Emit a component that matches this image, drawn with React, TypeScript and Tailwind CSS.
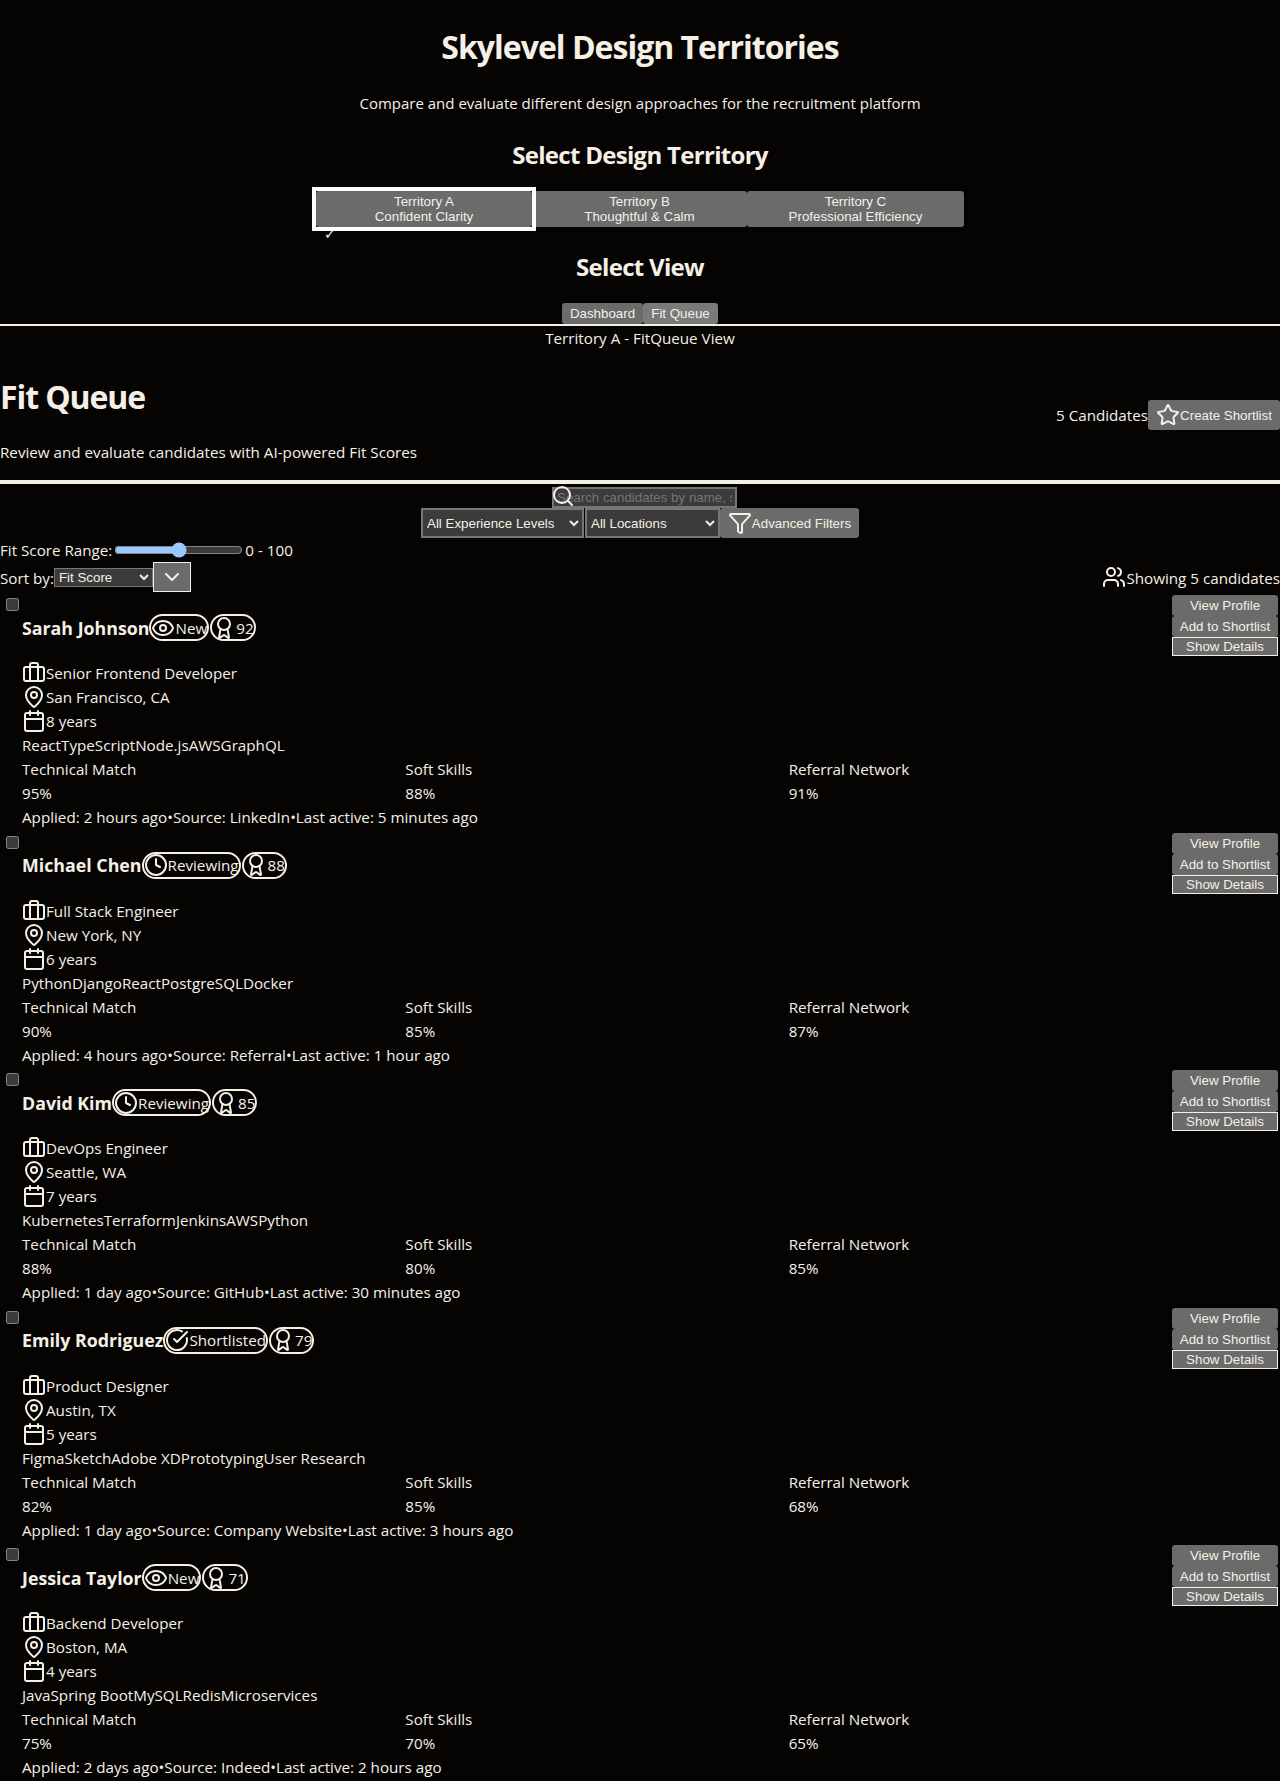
import {
  Award,
  Briefcase,
  Calendar,
  ChevronDown,
  CircleCheckBig,
  Clock,
  Eye,
  Filter,
  MapPin,
  Search,
  Star,
  Users,
} from 'lucide-react'

const candidates = [
  {
    name: 'Sarah Johnson',
    status: 'New',
    fit: 92,
    role: 'Senior Frontend Developer',
    location: 'San Francisco, CA',
    years: '8 years',
    skills: ['React', 'TypeScript', 'Node.js', 'AWS', 'GraphQL'],
    scores: ['95%', '88%', '91%'],
    applied: '2 hours ago',
    source: 'LinkedIn',
    active: '5 minutes ago',
  },
  {
    name: 'Michael Chen',
    status: 'Reviewing',
    fit: 88,
    role: 'Full Stack Engineer',
    location: 'New York, NY',
    years: '6 years',
    skills: ['Python', 'Django', 'React', 'PostgreSQL', 'Docker'],
    scores: ['90%', '85%', '87%'],
    applied: '4 hours ago',
    source: 'Referral',
    active: '1 hour ago',
  },
  {
    name: 'David Kim',
    status: 'Reviewing',
    fit: 85,
    role: 'DevOps Engineer',
    location: 'Seattle, WA',
    years: '7 years',
    skills: ['Kubernetes', 'Terraform', 'Jenkins', 'AWS', 'Python'],
    scores: ['88%', '80%', '85%'],
    applied: '1 day ago',
    source: 'GitHub',
    active: '30 minutes ago',
  },
  {
    name: 'Emily Rodriguez',
    status: 'Shortlisted',
    fit: 79,
    role: 'Product Designer',
    location: 'Austin, TX',
    years: '5 years',
    skills: ['Figma', 'Sketch', 'Adobe XD', 'Prototyping', 'User Research'],
    scores: ['82%', '85%', '68%'],
    applied: '1 day ago',
    source: 'Company Website',
    active: '3 hours ago',
  },
  {
    name: 'Jessica Taylor',
    status: 'New',
    fit: 71,
    role: 'Backend Developer',
    location: 'Boston, MA',
    years: '4 years',
    skills: ['Java', 'Spring Boot', 'MySQL', 'Redis', 'Microservices'],
    scores: ['75%', '70%', '65%'],
    applied: '2 days ago',
    source: 'Indeed',
    active: '2 hours ago',
  },
]

const buttonText = "font-['Liberation_Sans',sans-serif] text-[13.33px] leading-[15px] text-[#f5f0e6]"

function CandidateCard({ candidate }: { candidate: (typeof candidates)[number] }) {
  const StatusIcon =
    candidate.status === 'New' ? Eye : candidate.status === 'Reviewing' ? Clock : CircleCheckBig

  return (
    <div className="flex items-start justify-between pb-[3.5px]">
      <div className="flex-1">
        <input type="checkbox" className="mt-[3px] mb-[3px] ml-[6px] block h-[13px] w-[13px]" />
        <div className="pl-[22px]">
          <div className="flex h-[27px] items-center">
            <span className="text-[17.8px] font-bold">{candidate.name}</span>
            <span className="flex h-[27px] items-center rounded-full border-2 border-[#f5f0e6]">
              <StatusIcon size={24} />
              <span>{candidate.status}</span>
            </span>
            <span className="ml-[1px] flex h-[27px] items-center rounded-full border-2 border-[#f5f0e6]">
              <Award size={24} />
              <span>{candidate.fit}</span>
            </span>
          </div>
          <div className="mt-[20px] flex h-6 items-center">
            <Briefcase size={24} />
            <span>{candidate.role}</span>
          </div>
          <div className="flex h-6 items-center">
            <MapPin size={24} />
            <span>{candidate.location}</span>
          </div>
          <div className="flex h-6 items-center">
            <Calendar size={24} />
            <span>{candidate.years}</span>
          </div>
          <div className="flex h-6 items-center">
            {candidate.skills.map((skill) => (
              <span key={skill}>{skill}</span>
            ))}
          </div>
          <div className="grid grid-cols-3">
            {['Technical Match', 'Soft Skills', 'Referral Network'].map((label, i) => (
              <div key={label}>
                <div className="h-6">{label}</div>
                <div className="h-6">{candidate.scores[i]}</div>
              </div>
            ))}
          </div>
          <div className="flex h-6 items-center">
            <span>Applied: {candidate.applied}</span>
            <span>•</span>
            <span>Source: {candidate.source}</span>
            <span>•</span>
            <span>Last active: {candidate.active}</span>
          </div>
        </div>
      </div>
      <div className="mr-[2px] flex w-[106px] shrink-0 flex-col">
        <button className={`${buttonText} h-[21px] rounded-[3px] bg-[#6b6b6b]`}>View Profile</button>
        <button className={`${buttonText} h-[21px] rounded-[3px] bg-[#6b6b6b]`}>Add to Shortlist</button>
        <button className={`${buttonText} h-[19px] border border-[#f5f0e6] bg-[#6b6b6b]`}>Show Details</button>
      </div>
    </div>
  )
}

export default function App() {
  return (
    <div className="min-h-[1781px] bg-[#060303] font-['Open_Sans',sans-serif] text-[15.2px] leading-6 text-[#f5f0e6] [color-scheme:dark]">
      <div className="text-center">
        <h1 className="pt-[26px] text-[32px] leading-[42px] font-bold tracking-[-1px]">Skylevel Design Territories</h1>
        <p className="mt-[23px] text-[15px]">Compare and evaluate different design approaches for the recruitment platform</p>
        <h2 className="mt-[24px] text-[24px] leading-[32px] font-bold tracking-[-0.7px]">Select Design Territory</h2>
        <div className="mt-[20px] flex justify-center">
          <div className="relative z-10">
            <button className={`${buttonText} block h-[36px] w-[216px] rounded-[3px] bg-[#6b6b6b]`}>
              Territory A
              <br />
              Confident Clarity
            </button>
            <span className="absolute top-[33px] left-[8px] text-sm leading-5">✓</span>
            <span className="pointer-events-none absolute -inset-[4px] border-4 border-white" />
          </div>
          <button className={`${buttonText} h-[36px] w-[215px] rounded-[3px] bg-[#6b6b6b]`}>
            Territory B
            <br />
            Thoughtful &amp; Calm
          </button>
          <button className={`${buttonText} h-[36px] w-[217px] rounded-[3px] bg-[#6b6b6b]`}>
            Territory C
            <br />
            Professional Efficiency
          </button>
        </div>
        <h2 className="mt-[24px] text-[24px] leading-[32px] font-bold tracking-[-0.7px]">Select View</h2>
        <div className="mt-[20px] flex justify-center">
          <button className={`${buttonText} h-[21px] w-[81px] rounded-[3px] bg-[#6b6b6b]`}>Dashboard</button>
          <button className={`${buttonText} h-[21px] w-[75px] rounded-[3px] bg-[#7a7a7a]`}>Fit Queue</button>
        </div>
      </div>
      <div className="border-t-2 border-[#f5f0e6] text-center">Territory A - FitQueue View</div>

      <div className="flex items-center justify-between border-b-4 border-[#f5f0e6] pt-[26px] pb-[16px]">
        <div>
          <h1 className="text-[32px] leading-[42px] font-bold tracking-[-1.1px]">Fit Queue</h1>
          <p className="mt-[22px]">Review and evaluate candidates with AI-powered Fit Scores</p>
        </div>
        <div className="mb-[10px] flex items-center">
          <span>5 Candidates</span>
          <button className={`${buttonText} flex h-[30px] w-[132px] items-center justify-center rounded-[3px] bg-[#6b6b6b]`}>
            <Star size={24} />
            Create Shortlist
          </button>
        </div>
      </div>

      <div className="flex flex-col items-center pt-[3px]">
        <div className="relative ml-[9px]">
          <input
            placeholder="Search candidates by name, skills..."
            className={`${buttonText} block h-[21px] w-[185px] border-2 border-[#767676] bg-[#3b3b3b] px-[3px] placeholder:text-[#757575]`}
          />
          <Search size={24} className="absolute top-[-3px] left-[-1px]" />
        </div>
        <div className="flex items-center">
          <select className={`${buttonText} h-[30px] w-[163px] border-2 border-[#767676] bg-[#3b3b3b]`}>
            <option>All Experience Levels</option>
          </select>
          <select className={`${buttonText} ml-[1px] h-[30px] w-[135px] border-2 border-[#767676] bg-[#3b3b3b]`}>
            <option>All Locations</option>
          </select>
          <button className={`${buttonText} flex h-[30px] w-[139px] items-center justify-center rounded-[3px] bg-[#6b6b6b]`}>
            <Filter size={24} />
            Advanced Filters
          </button>
        </div>
      </div>

      <div className="flex h-[24px] items-center">
        <span>Fit Score Range:</span>
        <input type="range" defaultValue={50} className="mx-[2px] w-[129px]" />
        <span>0 - 100</span>
      </div>
      <div className="flex h-[30px] items-center justify-between">
        <div className="flex items-center">
          <span className="pt-[2px]">Sort by:</span>
          <select className={`${buttonText} h-[19px] w-[99px] border border-[#767676] bg-[#3b3b3b]`}>
            <option>Fit Score</option>
          </select>
          <button className="flex h-[30px] w-[38px] items-center justify-center border border-[#f5f0e6] bg-[#6b6b6b]">
            <ChevronDown size={24} />
          </button>
        </div>
        <div className="flex items-center">
          <Users size={24} />
          <span className="pt-[2px]">Showing 5 candidates</span>
        </div>
      </div>

      <div className="mt-[3px] flex flex-col">
        {candidates.map((candidate) => (
          <CandidateCard key={candidate.name} candidate={candidate} />
        ))}
      </div>
    </div>
  )
}
